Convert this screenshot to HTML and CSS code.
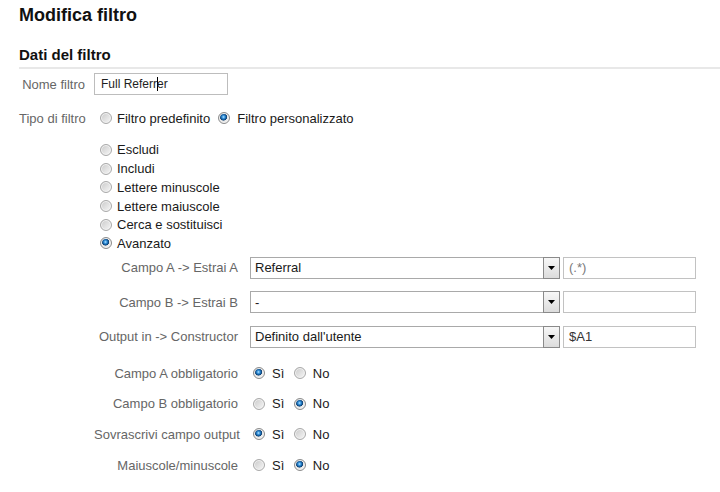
FILE: index.html
```html
<!DOCTYPE html>
<html lang="it">
<head>
<meta charset="utf-8">
<title>Modifica filtro</title>
<link rel="stylesheet" href="styles.css">
</head>
<body>
<div class="page">
  <h1 class="title">Modifica filtro</h1>
  <h2 class="section">Dati del filtro</h2>

  <div class="row row-name">
    <span class="lbl lbl-main">Nome filtro</span>
    <div class="textbox textbox-name">Full Referr<span class="caret"></span>er</div>
  </div>

  <div class="row row-type">
    <span class="lbl lbl-main">Tipo di filtro</span>
    <div class="opts">
      <input type="radio" class="radio" name="tipo">
      <span class="opt-text opt-gap-a">Filtro predefinito</span>
      <input type="radio" class="radio radio-second" name="tipo" checked>
      <span class="opt-text opt-gap-b">Filtro personalizzato</span>
    </div>
  </div>

  <div class="types">
    <div class="opt"><input type="radio" class="radio" name="kind"><span class="opt-text">Escludi</span></div>
    <div class="opt"><input type="radio" class="radio" name="kind"><span class="opt-text">Includi</span></div>
    <div class="opt"><input type="radio" class="radio" name="kind"><span class="opt-text">Lettere minuscole</span></div>
    <div class="opt"><input type="radio" class="radio" name="kind"><span class="opt-text">Lettere maiuscole</span></div>
    <div class="opt"><input type="radio" class="radio" name="kind"><span class="opt-text">Cerca e sostituisci</span></div>
    <div class="opt"><input type="radio" class="radio" name="kind" checked><span class="opt-text">Avanzato</span></div>
  </div>

  <div class="adv adv-fields">
    <span class="lbl">Campo A -&gt; Estrai A</span>
    <div class="combo">
      <div class="select"><span class="select-val">Referral</span><span class="select-btn"><svg width="7" height="4" viewBox="0 0 7 4"><polygon points="0,0 7,0 3.5,4" fill="#000"/></svg></span></div>
      <div class="textbox textbox-muted">(.*)</div>
    </div>

    <span class="lbl">Campo B -&gt; Estrai B</span>
    <div class="combo">
      <div class="select"><span class="select-val">-</span><span class="select-btn"><svg width="7" height="4" viewBox="0 0 7 4"><polygon points="0,0 7,0 3.5,4" fill="#000"/></svg></span></div>
      <div class="textbox"></div>
    </div>

    <span class="lbl">Output in -&gt; Constructor</span>
    <div class="combo">
      <div class="select"><span class="select-val">Definito dall'utente</span><span class="select-btn"><svg width="7" height="4" viewBox="0 0 7 4"><polygon points="0,0 7,0 3.5,4" fill="#000"/></svg></span></div>
      <div class="textbox">$A1</div>
    </div>
  </div>

  <div class="adv adv-flags">
    <span class="lbl">Campo A obbligatorio</span>
    <div class="yesno">
      <input type="radio" class="radio" name="fa" checked><span class="opt-text yn-text">Sì</span>
      <input type="radio" class="radio yn-second" name="fa"><span class="opt-text yn-text">No</span>
    </div>

    <span class="lbl">Campo B obbligatorio</span>
    <div class="yesno">
      <input type="radio" class="radio" name="fb"><span class="opt-text yn-text">Sì</span>
      <input type="radio" class="radio yn-second" name="fb" checked><span class="opt-text yn-text">No</span>
    </div>

    <span class="lbl">Sovrascrivi campo output</span>
    <div class="yesno">
      <input type="radio" class="radio" name="fo" checked><span class="opt-text yn-text">Sì</span>
      <input type="radio" class="radio yn-second" name="fo"><span class="opt-text yn-text">No</span>
    </div>

    <span class="lbl">Maiuscole/minuscole</span>
    <div class="yesno">
      <input type="radio" class="radio" name="fm"><span class="opt-text yn-text">Sì</span>
      <input type="radio" class="radio yn-second" name="fm" checked><span class="opt-text yn-text">No</span>
    </div>
  </div>
</div>
</body>
</html>
```

FILE: styles.css
```css
* {
  box-sizing: border-box;
}

body {
  margin: 0;
  background: #ffffff;
  font-family: "Liberation Sans", Arial, sans-serif;
  color: #222222;
}

.page {
  padding-left: 19px;
}

.title {
  margin: 5px 0 0;
  font-size: 18px;
  line-height: 21px;
  font-weight: bold;
  color: #111111;
}

.section {
  margin: 20px 0 0;
  padding-bottom: 3px;
  font-size: 15px;
  line-height: 18px;
  font-weight: bold;
  color: #111111;
  border-bottom: 2px solid #e8e8e8;
}

.row {
  display: flex;
  align-items: center;
}

.row-name {
  margin-top: 4px;
  height: 22px;
}

.row-type {
  margin-top: 13px;
  height: 20px;
}

.lbl {
  font-size: 13px;
  color: #666666;
  text-align: right;
  white-space: nowrap;
}

.lbl-main {
  width: 66px;
  margin-right: 9px;
  flex: none;
}

.opts {
  display: flex;
  align-items: center;
}

.opts .radio:first-child {
  margin-left: 6px;
}

.opt-text {
  font-size: 13px;
  color: #1a1a1a;
  white-space: nowrap;
}

.opt-gap-a {
  margin-left: 5px;
}

.radio-second {
  margin-left: 8px !important;
}

.opt-gap-b {
  margin-left: 7px;
}

.types {
  margin-left: 75px;
  margin-top: 12.6px;
}

.opt {
  display: flex;
  align-items: center;
  height: 18.7px;
}

.opt .radio {
  margin-left: 6px;
}

.opt .opt-text {
  margin-left: 5px;
}

.radio {
  -webkit-appearance: none;
  appearance: none;
  margin: 0;
  width: 12px;
  height: 12px;
  flex: none;
  border-radius: 50%;
  border: 1px solid #a9a9a9;
  box-shadow: inset 0 0 0 1px #f3f3f3;
  background: linear-gradient(135deg, #c9c9c9 0%, #dedede 45%, #f7f7f7 100%);
}

.radio:checked {
  border-color: #8c8c8c;
  background:
    radial-gradient(circle at 45% 40%, #c4e8ff 0, #47a2e6 1.2px, #1766ab 2.4px, #0c3e70 3.3px, transparent 3.8px),
    linear-gradient(135deg, #c9c9c9 0%, #dedede 45%, #f7f7f7 100%);
}

.textbox {
  width: 133px;
  height: 22px;
  border: 1px solid #c2c2c2;
  padding-left: 5px;
  display: flex;
  align-items: center;
  font-size: 13px;
  color: #333333;
  background: #ffffff;
  white-space: nowrap;
}

.textbox-name {
  width: 134px;
  padding-left: 6px;
  font-size: 12px;
  color: #1e1e1e;
  border-color: #bdbdbd;
}

.textbox-muted {
  color: #7a7a7a;
}

.caret {
  display: inline-block;
  width: 1px;
  height: 14px;
  margin-right: -1px;
  background: #000000;
}

.adv {
  margin-left: 75px;
  display: grid;
  grid-template-columns: 144px auto;
  column-gap: 12px;
  align-items: center;
  justify-content: start;
}

.adv-fields {
  margin-top: 4px;
  row-gap: 12.5px;
}

.adv-flags {
  margin-top: 15.3px;
  row-gap: 10.7px;
  grid-auto-rows: 20px;
}

.combo {
  display: flex;
  gap: 3px;
  height: 22px;
}

.select {
  width: 310px;
  height: 22px;
  border: 1px solid #a9a9a9;
  display: flex;
  align-items: center;
  font-size: 13px;
  color: #1a1a1a;
  background: #ffffff;
}

.select-val {
  flex: 1;
  padding-left: 4px;
  white-space: nowrap;
}

.select-btn {
  width: 17px;
  height: 22px;
  margin: -1px -1px -1px 0;
  border: 1px solid #8a8a8a;
  background: linear-gradient(#f7f7f7, #dcdcdc);
  display: flex;
  align-items: center;
  justify-content: center;
}

.yesno {
  display: flex;
  align-items: center;
}

.yesno .radio:first-child {
  margin-left: 3px;
}

.yn-text {
  margin-left: 7px;
}

.yn-second {
  margin-left: 9.5px;
}
```
